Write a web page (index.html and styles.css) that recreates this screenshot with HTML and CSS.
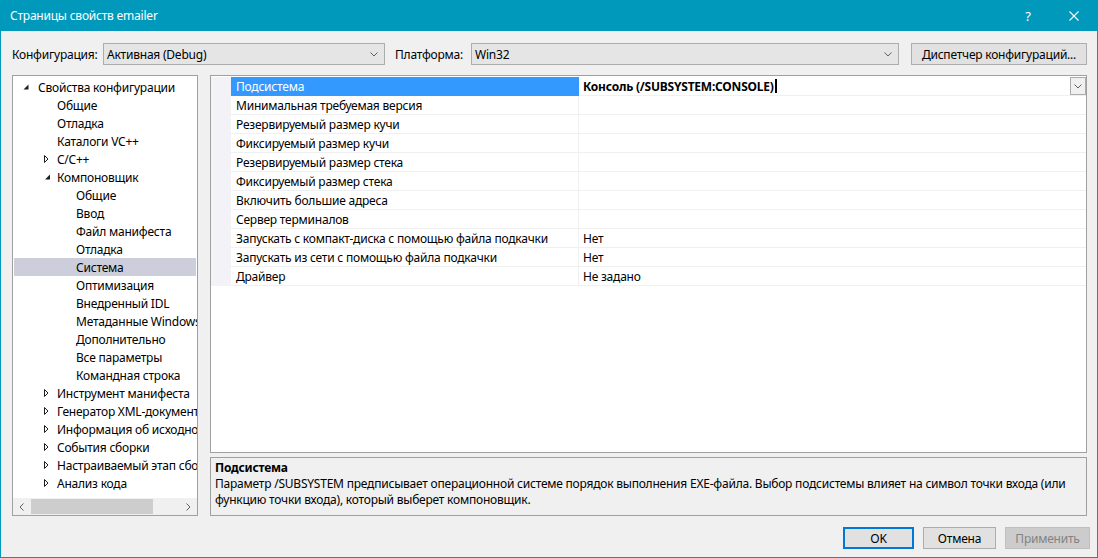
FILE: index.html
```html
<!DOCTYPE html>
<html lang="ru">
<head>
<meta charset="utf-8">
<title>Страницы свойств emailer</title>
<link rel="stylesheet" href="styles.css">
</head>
<body>
<div class="window">
  <div class="titlebar">
    <span class="title">Страницы свойств emailer</span>
    <span class="tb-btn tb-help">?</span>
    <span class="tb-btn tb-close"><svg width="10" height="10" viewBox="0 0 10 10"><path d="M0.5 0.5L9.5 9.5M9.5 0.5L0.5 9.5" stroke="#fff" stroke-width="1.1" fill="none"/></svg></span>
  </div>

  <div class="toolbar">
    <span class="lbl lbl-config">Конфигурация:</span>
    <div class="combo combo-config"><span>Активная (Debug)</span><svg class="chev" width="8" height="5" viewBox="0 0 8 5"><path d="M0.5 0.5L4 4L7.5 0.5" stroke="#606060" fill="none"/></svg></div>
    <span class="lbl lbl-platform">Платформа:</span>
    <div class="combo combo-platform"><span>Win32</span><svg class="chev" width="8" height="5" viewBox="0 0 8 5"><path d="M0.5 0.5L4 4L7.5 0.5" stroke="#606060" fill="none"/></svg></div>
    <button class="btn btn-manager">Диспетчер конфигураций...</button>
  </div>

  <div class="main">
    <div class="tree">
      <div class="tree-list">
        <div class="trow l0"><span class="exp"><svg width="10" height="10" viewBox="0 0 10 10"><polygon points="6.5,2.5 6.5,7.5 1.5,7.5" fill="#1e1e1e"/></svg></span><span class="ttext">Свойства конфигурации</span></div>
        <div class="trow l1"><span class="exp"></span><span class="ttext">Общие</span></div>
        <div class="trow l1"><span class="exp"></span><span class="ttext">Отладка</span></div>
        <div class="trow l1"><span class="exp"></span><span class="ttext">Каталоги VC++</span></div>
        <div class="trow l1"><span class="exp"><svg width="10" height="10" viewBox="0 0 10 10"><polygon points="3.5,1.5 3.5,8.5 7,5" fill="none" stroke="#1e1e1e"/></svg></span><span class="ttext">C/C++</span></div>
        <div class="trow l1"><span class="exp"><svg width="10" height="10" viewBox="0 0 10 10"><polygon points="9,2.5 9,7.5 4,7.5" fill="#1e1e1e"/></svg></span><span class="ttext">Компоновщик</span></div>
        <div class="trow l2"><span class="exp"></span><span class="ttext">Общие</span></div>
        <div class="trow l2"><span class="exp"></span><span class="ttext">Ввод</span></div>
        <div class="trow l2"><span class="exp"></span><span class="ttext">Файл манифеста</span></div>
        <div class="trow l2"><span class="exp"></span><span class="ttext">Отладка</span></div>
        <div class="trow l2 sel"><span class="exp"></span><span class="ttext">Система</span></div>
        <div class="trow l2"><span class="exp"></span><span class="ttext">Оптимизация</span></div>
        <div class="trow l2"><span class="exp"></span><span class="ttext">Внедренный IDL</span></div>
        <div class="trow l2"><span class="exp"></span><span class="ttext">Метаданные Windows</span></div>
        <div class="trow l2"><span class="exp"></span><span class="ttext">Дополнительно</span></div>
        <div class="trow l2"><span class="exp"></span><span class="ttext">Все параметры</span></div>
        <div class="trow l2"><span class="exp"></span><span class="ttext">Командная строка</span></div>
        <div class="trow l1"><span class="exp"><svg width="10" height="10" viewBox="0 0 10 10"><polygon points="3.5,1.5 3.5,8.5 7,5" fill="none" stroke="#1e1e1e"/></svg></span><span class="ttext">Инструмент манифеста</span></div>
        <div class="trow l1"><span class="exp"><svg width="10" height="10" viewBox="0 0 10 10"><polygon points="3.5,1.5 3.5,8.5 7,5" fill="none" stroke="#1e1e1e"/></svg></span><span class="ttext">Генератор XML-документов</span></div>
        <div class="trow l1"><span class="exp"><svg width="10" height="10" viewBox="0 0 10 10"><polygon points="3.5,1.5 3.5,8.5 7,5" fill="none" stroke="#1e1e1e"/></svg></span><span class="ttext">Информация об исходном коде</span></div>
        <div class="trow l1"><span class="exp"><svg width="10" height="10" viewBox="0 0 10 10"><polygon points="3.5,1.5 3.5,8.5 7,5" fill="none" stroke="#1e1e1e"/></svg></span><span class="ttext">События сборки</span></div>
        <div class="trow l1"><span class="exp"><svg width="10" height="10" viewBox="0 0 10 10"><polygon points="3.5,1.5 3.5,8.5 7,5" fill="none" stroke="#1e1e1e"/></svg></span><span class="ttext">Настраиваемый этап сборки</span></div>
        <div class="trow l1"><span class="exp"><svg width="10" height="10" viewBox="0 0 10 10"><polygon points="3.5,1.5 3.5,8.5 7,5" fill="none" stroke="#1e1e1e"/></svg></span><span class="ttext">Анализ кода</span></div>
      </div>
      <div class="hscroll">
        <span class="sb-arrow"><svg width="5" height="8" viewBox="0 0 5 8"><path d="M4.5 0.5L1 4L4.5 7.5" stroke="#606060" fill="none"/></svg></span>
        <span class="sb-track"><span class="sb-thumb"></span></span>
        <span class="sb-arrow"><svg width="5" height="8" viewBox="0 0 5 8"><path d="M0.5 0.5L4 4L0.5 7.5" stroke="#606060" fill="none"/></svg></span>
      </div>
    </div>

    <div class="right">
      <div class="grid">
        <div class="prow sel"><span class="gut"></span><span class="pname">Подсистема</span><span class="pval"><b>Консоль (/SUBSYSTEM:CONSOLE)</b><span class="caret"></span><span class="dd"><svg width="8" height="5" viewBox="0 0 8 5"><path d="M0.5 0.5L4 4L7.5 0.5" stroke="#606060" fill="none"/></svg></span></span></div>
        <div class="prow"><span class="gut"></span><span class="pname">Минимальная требуемая версия</span><span class="pval"></span></div>
        <div class="prow"><span class="gut"></span><span class="pname">Резервируемый размер кучи</span><span class="pval"></span></div>
        <div class="prow"><span class="gut"></span><span class="pname">Фиксируемый размер кучи</span><span class="pval"></span></div>
        <div class="prow"><span class="gut"></span><span class="pname">Резервируемый размер стека</span><span class="pval"></span></div>
        <div class="prow"><span class="gut"></span><span class="pname">Фиксируемый размер стека</span><span class="pval"></span></div>
        <div class="prow"><span class="gut"></span><span class="pname">Включить большие адреса</span><span class="pval"></span></div>
        <div class="prow"><span class="gut"></span><span class="pname">Сервер терминалов</span><span class="pval"></span></div>
        <div class="prow"><span class="gut"></span><span class="pname">Запускать с компакт-диска с помощью файла подкачки</span><span class="pval">Нет</span></div>
        <div class="prow"><span class="gut"></span><span class="pname">Запускать из сети с помощью файла подкачки</span><span class="pval">Нет</span></div>
        <div class="prow"><span class="gut"></span><span class="pname">Драйвер</span><span class="pval">Не задано</span></div>
      </div>
      <div class="desc">
        <div class="desc-title">Подсистема</div>
        <div class="desc-text">Параметр /SUBSYSTEM предписывает операционной системе порядок выполнения EXE-файла. Выбор подсистемы влияет на символ точки входа (или<br>функцию точки входа), который выберет компоновщик.</div>
      </div>
    </div>
  </div>

  <div class="footer">
    <button class="btn btn-ok">OK</button>
    <button class="btn btn-cancel">Отмена</button>
    <button class="btn btn-apply" disabled>Применить</button>
  </div>
</div>
</body>
</html>
```
FILE: styles.css
```css
* { box-sizing: border-box; }
html, body { margin: 0; padding: 0; }
body {
  width: 1098px;
  height: 558px;
  overflow: hidden;
  font-family: "Noto Sans", "Open Sans", sans-serif;
  font-size: 12px;
  letter-spacing: -0.22px;
  color: #000;
  background: #f0f0f0;
}
.window {
  width: 1098px;
  height: 558px;
  border: 1px solid #0099bc;
  border-top: none;
  background: #f0f0f0;
  display: flex;
  flex-direction: column;
}
.titlebar {
  height: 31px;
  flex: none;
  background: #0099bc;
  color: #fff;
  display: flex;
  align-items: center;
  padding-left: 9px;
}
.title { flex: 1; }
.tb-btn {
  width: 46px;
  height: 31px;
  display: flex;
  align-items: center;
  justify-content: center;
}
.tb-help { font-size: 13px; }

.toolbar {
  display: flex;
  align-items: center;
  height: 22px;
  margin-top: 12px;
  padding-left: 11px;
  flex: none;
}
.lbl { white-space: nowrap; }
.lbl-config { width: 91px; }
.lbl-platform { width: 76px; margin-left: 10px; }
.combo {
  height: 22px;
  border: 1px solid #acacac;
  background: #e5e5e5;
  display: flex;
  align-items: center;
  justify-content: space-between;
  padding: 0 6px 0 3px;
}
.combo-config { width: 282px; }
.combo-platform { width: 428px; }
.btn {
  font-family: inherit;
  font-size: 12px;
  letter-spacing: inherit;
  color: #000;
  border: 1px solid #adadad;
  background: #e1e1e1;
  padding: 0;
  margin: 0;
  display: flex;
  align-items: center;
  justify-content: center;
}
.btn-manager { width: 176px; height: 22px; margin-left: 12px; }

.main {
  display: flex;
  gap: 12px;
  height: 441px;
  margin-top: 10px;
  padding: 0 10px 0 11px;
  flex: none;
}
.tree {
  width: 186px;
  flex: none;
  border: 1px solid #a0a0a0;
  background: #fff;
  display: flex;
  flex-direction: column;
}
.tree-list {
  flex: 1;
  padding: 2px 1px 0;
  overflow: hidden;
}
.trow {
  height: 18px;
  display: flex;
  align-items: center;
  white-space: nowrap;
}
.trow.l0 { padding-left: 8px; }
.trow.l1 { padding-left: 27px; }
.trow.l2 { padding-left: 46px; }
.trow.sel { background: #cccedb; }
.exp {
  width: 16px;
  flex: none;
  display: flex;
  align-items: center;
}
.hscroll {
  height: 17px;
  flex: none;
  display: flex;
  background: #f0f0f0;
}
.sb-arrow {
  width: 17px;
  flex: none;
  display: flex;
  align-items: center;
  justify-content: center;
}
.sb-track { flex: 1; display: flex; align-items: center; }
.sb-thumb {
  width: 122px;
  height: 15px;
  margin-left: 1px;
  background: #cdcdcd;
}

.right {
  flex: 1;
  display: flex;
  flex-direction: column;
}
.grid {
  height: 378px;
  flex: none;
  border: 1px solid #a0a0a0;
  background: #fff;
  padding-top: 1px;
}
.prow { display: flex; height: 19px; }
.gut { width: 20px; flex: none; background: #f3f3f7; }
.pname {
  width: 348px;
  flex: none;
  padding-left: 5px;
  border-bottom: 1px solid #f0f0f0;
  border-right: 1px solid #f0f0f0;
  display: flex;
  align-items: center;
  white-space: nowrap;
  overflow: hidden;
}
.pval {
  flex: 1;
  padding-left: 4px;
  border-bottom: 1px solid #f0f0f0;
  display: flex;
  align-items: center;
  white-space: nowrap;
}
.prow.sel .pname {
  background: #3399ff;
  color: #fff;
  border-bottom-color: #3399ff;
  border-right-color: #3399ff;
}
.pval b { font-weight: 700; }
.caret {
  width: 2px;
  height: 14px;
  background: #000;
  margin-left: 1px;
}
.dd {
  margin-left: auto;
  width: 16px;
  height: 18px;
  border: 1px solid #acacac;
  background: #f0f0f0;
  display: flex;
  align-items: center;
  justify-content: center;
}
.desc {
  height: 59px;
  margin-top: 4px;
  flex: none;
  border: 1px solid #a0a0a0;
  background: #f0f0f0;
  padding: 2px 4px 0;
  line-height: 16px;
  overflow: hidden;
}
.desc-title { font-weight: 700; }
.desc-text { white-space: nowrap; }

.footer {
  display: flex;
  justify-content: flex-end;
  gap: 9px;
  height: 22px;
  margin-top: 11px;
  padding-right: 7px;
  flex: none;
}
.btn-ok { width: 71px; height: 22px; border: 2px solid #0078d7; }
.btn-cancel { width: 73px; height: 22px; }
.btn-apply {
  width: 85px;
  height: 22px;
  background: #cccccc;
  border-color: #bfbfbf;
  color: #838383;
}
```
